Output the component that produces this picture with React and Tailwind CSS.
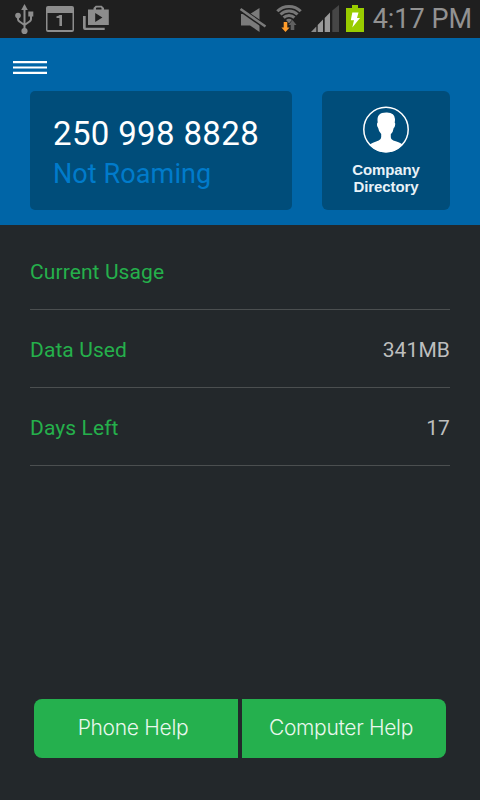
import React from "react";

const StatusBar = () => {
  return (
    <div className="flex h-[38px] w-full justify-between bg-[#1f1f1f] text-[#8d8d8d]">
      <svg width="115" height="38" viewBox="0 0 115 38" fill="currentColor">
        {/* usb */}
        <g>
          <path d="M24.5 4l3.3 6h-6.6z" />
          <circle cx="24.5" cy="31" r="3.1" />
          <circle cx="18" cy="15.6" r="2.8" />
          <rect x="28.3" y="11.5" width="5" height="5" />
          <path
            d="M24.5 8v22M18 15v4.2q0 1.500 1.500 2.300l5 3.500 5-3.500q1.500-.8 1.500-2.300V15"
            fill="none"
            stroke="currentColor"
            strokeWidth="2"
          />
        </g>
        {/* calendar */}
        <path
          fillRule="evenodd"
          d="M48 6h24q2 0 2 2v22q0 2-2 2H48q-2 0-2-2V8q0-2 2-2zm-.5 7v17h25V13z"
        />
        <path d="M56.500 16.200q2.500-.2 3-1.200H62v11h-2.600v-8h-2.900z" />
        {/* play store bag */}
        <path
          fillRule="evenodd"
          d="M88 9.600h5.500V8l2.200-2.200h6L104 8v1.600h4.800V25H88zM96 9.600h5.500V8.200l-.6-.6h-4.300l-.6.6zm-.8 3.400v9l7.200-4.500z"
        />
        <path d="M83 16h2.700v11.700h19V30H85q-2 0-2-2z" />
      </svg>
      <div className="flex pr-[8px]">
        <svg width="134" height="38" viewBox="235 0 134 38" className="shrink-0">
          {/* muted speaker */}
          <g fill="#7b7b7b">
            <path d="M241 14h9l9.500-6v24L250 25.500h-9z" />
            <path d="M240 9l25 17.500" stroke="#1f1f1f" strokeWidth="5" />
            <path d="M240.500 9l25 17.500" stroke="#7b7b7b" strokeWidth="2.500" />
          </g>
          {/* wifi */}
          <g fill="none" stroke="#777" strokeWidth="3">
            <path d="M277.300 11.300a16.500 16.500 0 0 1 23.400 0" />
            <path d="M280.500 14.500a12 12 0 0 1 17 0" />
            <path d="M283.600 17.600a7.700 7.700 0 0 1 10.800 0" />
          </g>
          <path d="M286 20a4.200 4.200 0 0 1 6 0l-3 3.200z" fill="#777" />
          <path d="M283.700 22h3.600v5.500h2.300L285.500 32l-4.100-4.500h2.300z" fill="#ff9c2b" />
          <path d="M292.500 20l4 5h-2.200v5h-3.600v-5h-2.200z" fill="#606060" />
          {/* signal */}
          <path d="M311 32l5.300-5.500V32z" fill="#8a8a8a" />
          <path d="M317.700 25l5.300-5.500V32h-5.300z" fill="#999" />
          <path d="M324.700 18l5.300-5.500V32h-5.300z" fill="#999" />
          <path d="M332.300 10.500L339 5v27h-6.700z" fill="#464646" />
          {/* battery */}
          <path d="M346 8h6V5h6v3h6v24h-18z" fill="#99cc00" />
          <path d="M352.300 12.500h6.200L357 18h3l-7.700 9.500 1.700-7.300h-3.200z" fill="#fff" />
        </svg>
        <span className="ml-1 whitespace-nowrap text-[27px] leading-[38px] text-[#929292]">
          4:17 PM
        </span>
      </div>
    </div>
  );
};

const Header = () => {
  return (
    <header className="h-[187px] bg-[#0065a7] px-[30px] pt-[23px]">
      <svg width="34" height="13" viewBox="0 0 34 13" className="-ml-[17px]">
        <path d="M0 1.200h34M0 6.500h34M0 11.800h34" stroke="#fff" strokeWidth="2.200" />
      </svg>
      <div className="mt-[17px] flex justify-between">
        <div className="h-[119px] w-[262px] rounded-[5px] bg-[#004d7a] pl-[23px] pt-[23px]">
          <p className="whitespace-nowrap text-[33px] leading-[40px] tracking-[0.35px] text-white">
            250 998 8828
          </p>
          <p className="whitespace-nowrap text-[27px] leading-[40px] tracking-[0.1px] text-[#007bcb]">
            Not Roaming
          </p>
        </div>
        <button className="flex h-[119px] w-[128px] flex-col items-center rounded-[6px] bg-[#004d7a] pt-[15px]">
          <svg width="47" height="47" viewBox="0 0 47 47">
            <circle cx="23" cy="23.500" r="22.200" fill="none" stroke="#fff" strokeWidth="1.500" />
            <path
              d="M6.700 38.500q2-1.500 9-4 2.500-1 2.500-3.500v-3q-2.600-2.500-3-6-1.500-1.500-1.200-4 .2-1.500.7-1.600-.8-5.200 1.300-7.500 2.500-2.600 8-2.400 7.700.2 8 6.500 0 2-.3 3.500 1 .8.3 3.300-.4 1.800-1.300 2.200-.5 4-2.900 6.200v3q0 2.500 2.500 3.300 7 2.200 9.200 4Q32.500 46.500 23 46.500T6.700 38.500z"
              fill="#fff"
            />
          </svg>
          <span className="mt-[8px] font-['Liberation_Sans',sans-serif] text-[15px] font-bold leading-[17px] tracking-[-0.100px] text-[#e8f2f8]">
            Company
            <br />
            Directory
          </span>
        </button>
      </div>
    </header>
  );
};

const UsageRow = ({ label, value }) => {
  return (
    <div className="flex h-[78px] items-center justify-between border-b border-[#4b4f50] pt-[4px] text-[21px] tracking-[0.1px]">
      <span className="text-[#25b04b]">{label}</span>
      <span className="text-[#bdbebe]">{value}</span>
    </div>
  );
};

const App = () => {
  return (
    <div className="flex h-[800px] w-[480px] flex-col overflow-hidden bg-[#23282b] font-['Roboto',sans-serif]">
      <StatusBar />
      <Header />

      <main className="flex-1 px-[30px] pt-[7px]">
        <UsageRow label="Current Usage" />
        <UsageRow label="Data Used" value="341MB" />
        <UsageRow label="Days Left" value="17" />
      </main>

      <footer className="flex gap-1 px-[34px] pb-[42px] font-['Inter',sans-serif] text-[21px] font-light text-[#e9f7ed]">
        <button className="h-[59px] flex-1 rounded-l-[8px] bg-[#25b04e] pb-[2px] pr-[6px] tracking-[-0.3px]">
          Phone Help
        </button>
        <button className="h-[59px] flex-1 rounded-r-[8px] bg-[#25b04e] pb-[2px] pr-[6px] tracking-[-0.3px]">
          Computer Help
        </button>
      </footer>
    </div>
  );
};

export default App;
